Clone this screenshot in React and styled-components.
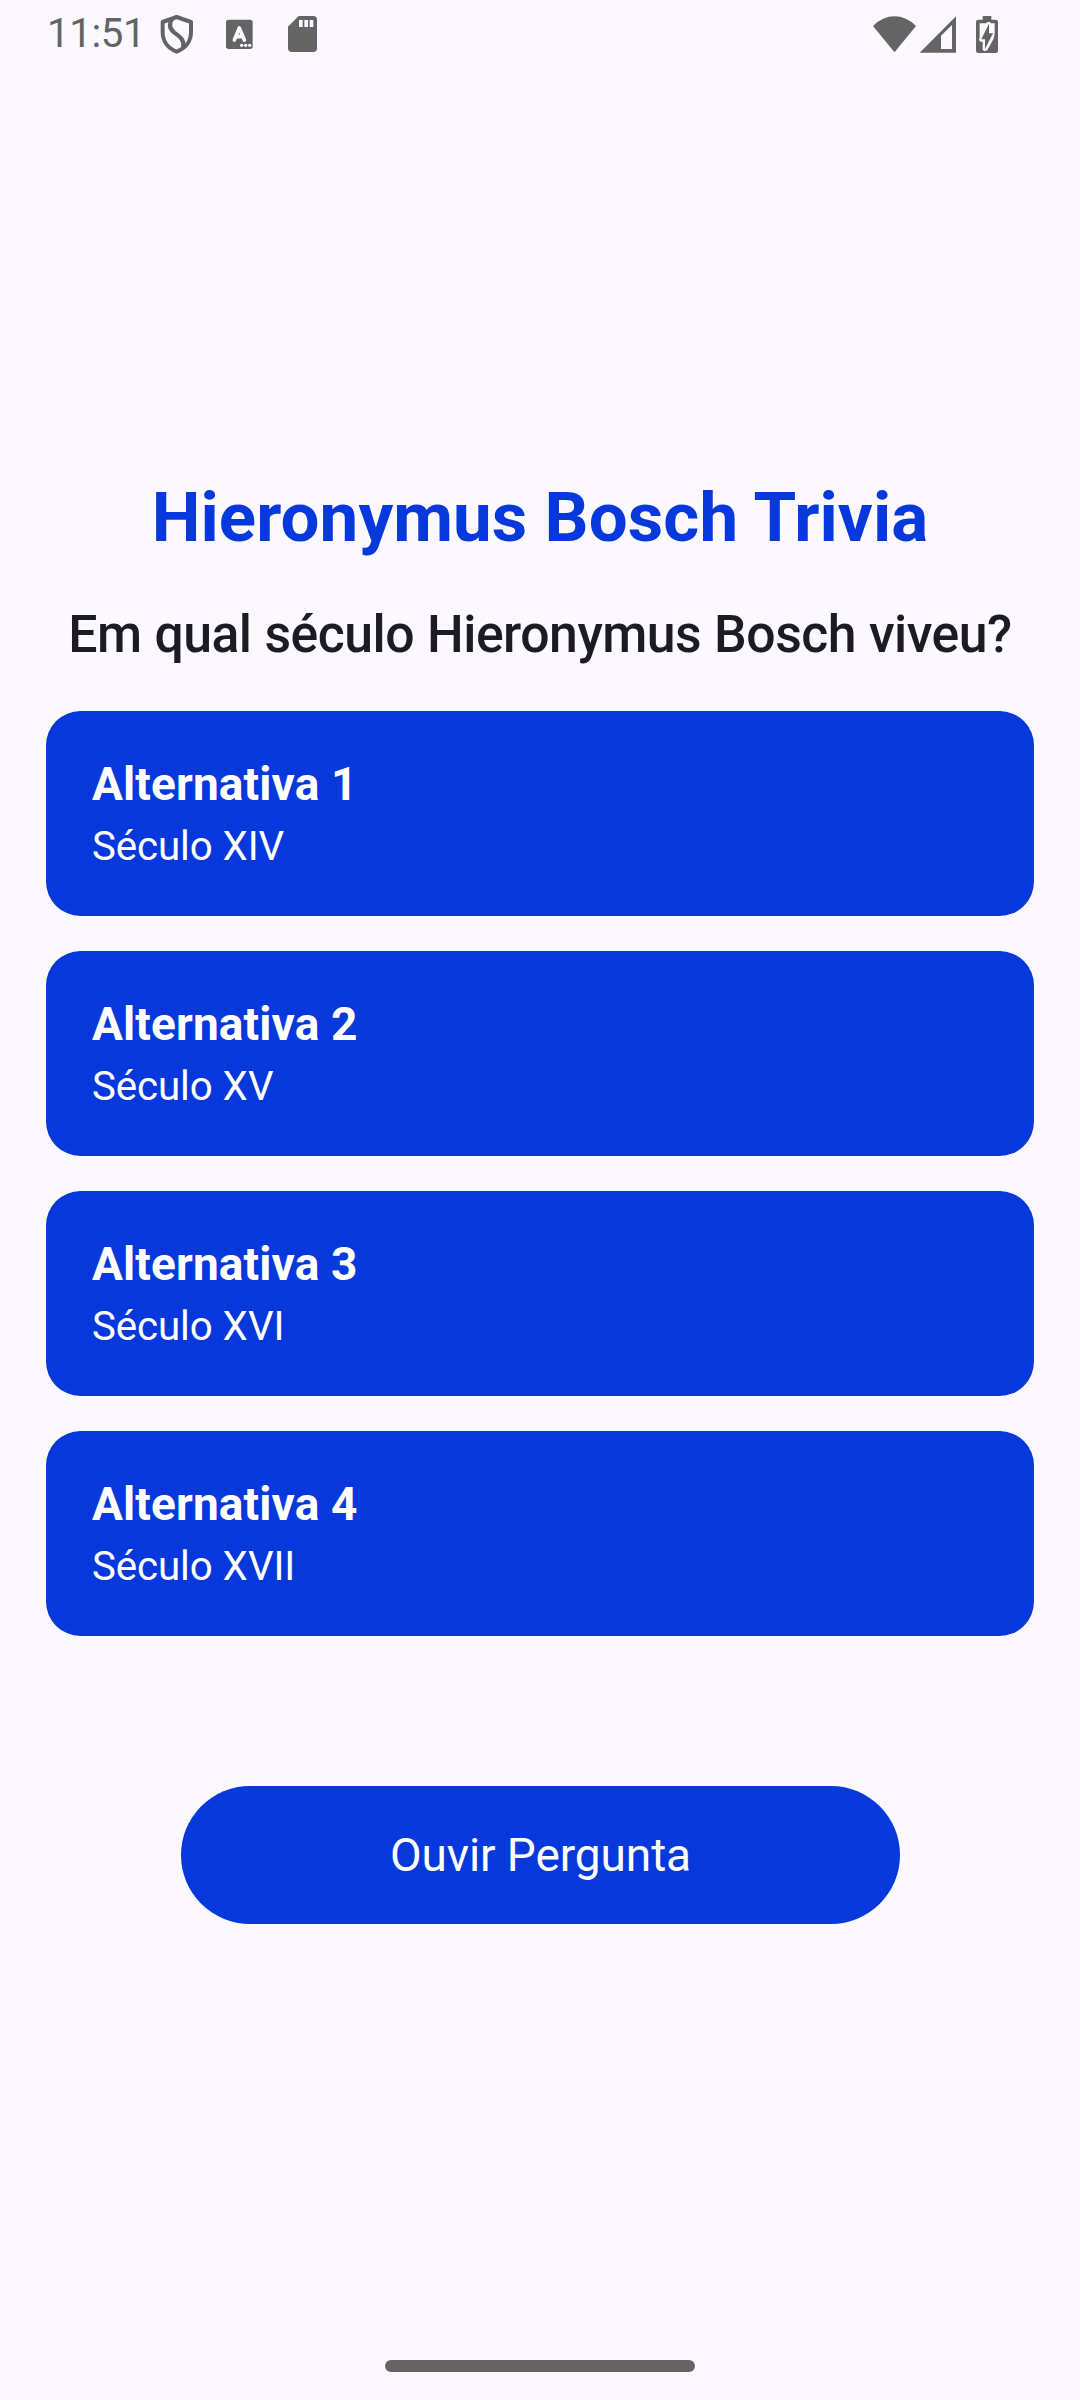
import React from "react";
import styled, { createGlobalStyle } from "styled-components";

const BLUE = "#0638DB";
const SURFACE = "#FBF8FF";
const SYSTEM = "#646464";

const GlobalStyle = createGlobalStyle`
  * { box-sizing: border-box; }
  body {
    margin: 0;
    background: ${SURFACE};
    font-family: Roboto, "Noto Sans", sans-serif;
  }
`;

const Screen = styled.div`
  width: 1080px;
  height: 2400px;
  display: flex;
  flex-direction: column;
  background: ${SURFACE};
`;

const StatusBar = styled.header`
  height: 68px;
  flex: none;
  display: flex;
  align-items: center;
  justify-content: space-between;
  padding: 0 80px 0 47px;
  color: ${SYSTEM};
`;

const StatusGroup = styled.div`
  display: flex;
  align-items: center;
`;

const Clock = styled.span`
  width: 111px;
  font-size: 40.25px;
  line-height: 48px;
  letter-spacing: -0.4px;
  white-space: nowrap;
`;

const Icon = styled.svg`
  display: block;
  flex: none;
  width: ${(p) => p.$w}px;
  height: ${(p) => p.$h}px;
  margin-left: ${(p) => p.$gap || 0}px;
  fill: currentColor;
`;

const Content = styled.main`
  flex: 1;
  display: flex;
  flex-direction: column;
  align-items: center;
  padding: 408px 46px 0;
`;

const Title = styled.h1`
  margin: 0;
  color: ${BLUE};
  font-size: 69px;
  font-weight: 700;
  line-height: 83px;
  letter-spacing: 0.1px;
  white-space: nowrap;
`;

const Question = styled.h2`
  margin: 46px 0 0;
  color: #1a1b23;
  font-size: 51.75px;
  font-weight: 500;
  line-height: 60px;
  letter-spacing: -0.5px;
  word-spacing: 0.5px;
  white-space: nowrap;
`;

const Options = styled.div`
  width: 100%;
  margin-top: 46px;
  display: flex;
  flex-direction: column;
  gap: 35px;
`;

const OptionCard = styled.button`
  height: 205px;
  border: 0;
  border-radius: 34.5px;
  padding: 46px 46px 0;
  display: flex;
  flex-direction: column;
  background: ${BLUE};
  color: #fff;
  font-family: inherit;
  text-align: left;
`;

const OptionTitle = styled.span`
  font-size: 46px;
  font-weight: 700;
  line-height: 54px;
  letter-spacing: 0.12px;
`;

const OptionText = styled.span`
  margin-top: 12px;
  font-size: 40.25px;
  line-height: 48px;
  letter-spacing: -0.1px;
`;

const ListenButton = styled.button`
  width: 719px;
  height: 138px;
  margin: 150px 0 0 1px;
  border: 0;
  border-radius: 69px;
  background: ${BLUE};
  color: #fff;
  font-family: inherit;
  font-size: 46px;
  line-height: 54px;
  letter-spacing: -0.1px;
`;

const GestureArea = styled.footer`
  height: 40px;
  flex: none;
  display: flex;
  justify-content: center;
`;

const GestureHandle = styled.div`
  width: 310px;
  height: 12px;
  border-radius: 6px;
  background: ${SYSTEM};
`;

const options = ["Século XIV", "Século XV", "Século XVI", "Século XVII"];

const ShieldIcon = () => (
  <Icon viewBox="384 36 114 132" $w={38} $h={44}>
    <path
      d="M440 51 L483 66 V97 C483 126 464 146 440 155 C416 146 398 126 398 97 V66 Z"
      fill="none"
      stroke="currentColor"
      strokeWidth="12"
      strokeLinejoin="round"
    />
    <path
      d="M427 56 C416 72 418 86 433 98 C451 111 464 121 460 143"
      fill="none"
      stroke="currentColor"
      strokeWidth="12.500"
    />
  </Icon>
);

const KeyboardIcon = () => (
  <Icon viewBox="582 48 93 108" $w={31} $h={36} $gap={28}>
    <rect x="588" y="59" width="80" height="88" rx="8" />
    <path
      d="M613 120 L628 84 L643 120 M617 110 H639"
      fill="none"
      stroke={SURFACE}
      strokeWidth="11"
      strokeLinecap="round"
      strokeLinejoin="round"
    />
    <circle cx="635" cy="136" r="5" fill={SURFACE} />
    <circle cx="647" cy="136" r="5" fill={SURFACE} />
    <circle cx="659" cy="136" r="5" fill={SURFACE} />
  </Icon>
);

const SdCardIcon = () => (
  <Icon viewBox="768 42 99 120" $w={33} $h={40} $gap={31}>
    <path d="M806 48 H850 Q861 48 861 59 V145 Q861 156 850 156 H785 Q774 156 774 145 V80 Z" />
    <path d="M807 60 h11 v21 h-11 z M823 60 h11 v21 h-11 z M839 60 h11 v21 h-11 z" fill={SURFACE} />
  </Icon>
);

const WifiIcon = () => (
  <Icon viewBox="63 42 141 120" $w={47} $h={40}>
    <path d="M69 78 Q98 49 133.500 49 Q169 49 198 78 L133.500 157 Z" />
  </Icon>
);

const SignalIcon = () => (
  <Icon viewBox="204 42 120 120" $w={40} $h={40}>
    <path fillRule="evenodd" d="M209 158 L318 49 V158 Z M273 107 V147 H306 V75 Z" />
  </Icon>
);

const BatteryIcon = () => (
  <Icon viewBox="372 42 78 120" $w={26} $h={40} $gap={16}>
    <path d="M398 48 H424 V59 H437 Q444 59 444 66 V152 Q444 159 437 159 H385 Q378 159 378 152 V66 Q378 59 385 59 H398 Z" />
    <path
      d="M389 70 H408 L413 66 H420 L423 70 H434 V102 L431 116 L412 150 L407 153 H401 L398 148 V125 H391 L387 120 L389 112 Z"
      fill={SURFACE}
    />
    <path d="M417 71 L394 118 H405 V147 L429 100 H417 Z" />
  </Icon>
);

export default function App() {
  return (
    <Screen>
      <GlobalStyle />
      <StatusBar>
        <StatusGroup>
          <Clock>11:51</Clock>
          <ShieldIcon />
          <KeyboardIcon />
          <SdCardIcon />
        </StatusGroup>
        <StatusGroup>
          <WifiIcon />
          <SignalIcon />
          <BatteryIcon />
        </StatusGroup>
      </StatusBar>
      <Content>
        <Title>Hieronymus Bosch Trivia</Title>
        <Question>Em qual século Hieronymus Bosch viveu?</Question>
        <Options>
          {options.map((text, i) => (
            <OptionCard key={text}>
              <OptionTitle>Alternativa {i + 1}</OptionTitle>
              <OptionText>{text}</OptionText>
            </OptionCard>
          ))}
        </Options>
        <ListenButton>Ouvir Pergunta</ListenButton>
      </Content>
      <GestureArea>
        <GestureHandle />
      </GestureArea>
    </Screen>
  );
}
